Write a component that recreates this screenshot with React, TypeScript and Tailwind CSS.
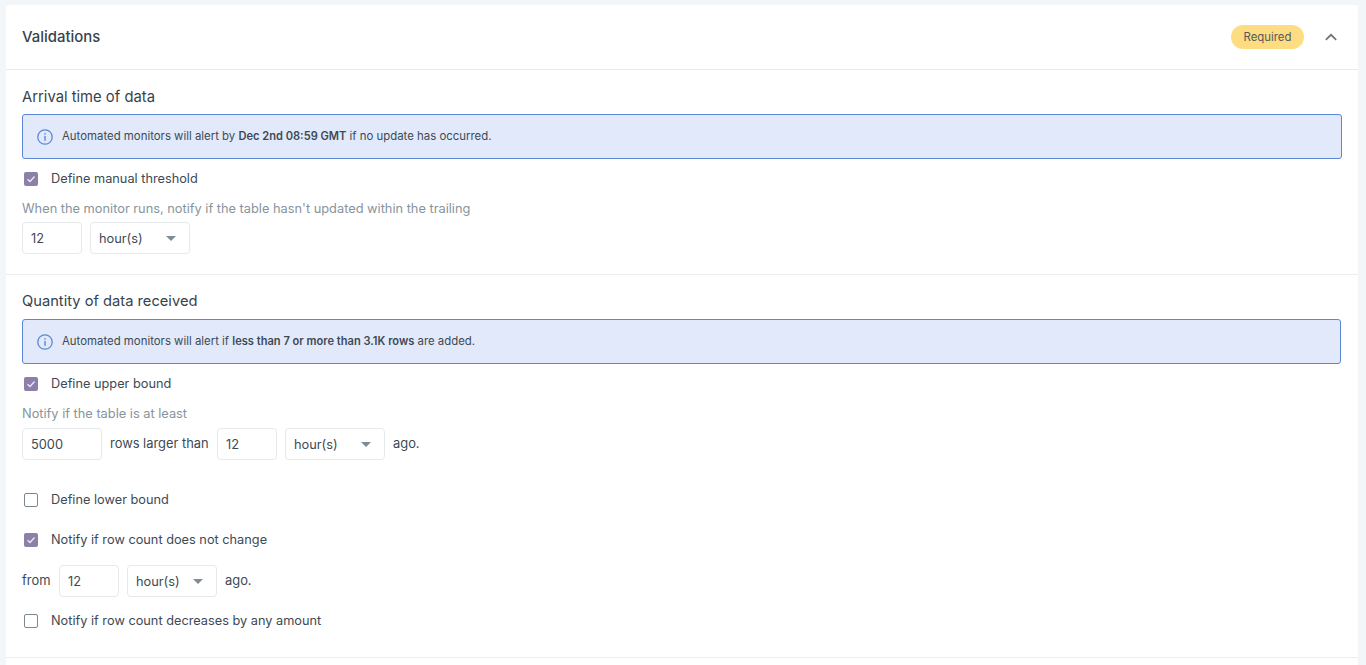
import React from "react";

const Info = () => (
  <svg width="16" height="16" viewBox="0 0 16 16" fill="none" className="shrink-0">
    <circle cx="8" cy="8" r="7.2" stroke="#5b88d6" strokeWidth="1.3" />
    <rect x="7.3" y="7" width="1.4" height="4.8" fill="#5b88d6" />
    <rect x="7.3" y="4.2" width="1.4" height="1.5" fill="#5b88d6" />
  </svg>
);

const Check = ({ checked, label }: { checked?: boolean; label: string }) => (
  <div className="flex items-center h-5 pl-[2px]">
    {checked ? (
      <span className="w-[14px] h-[14px] rounded-[2px] bg-[#8c7fa8] flex items-center justify-center">
        <svg width="10" height="10" viewBox="0 0 10 10" fill="none">
          <path d="M1.5 5.2 L4 7.5 L8.5 2.5" stroke="#eeeaf4" strokeWidth="1.3" />
        </svg>
      </span>
    ) : (
      <span className="w-[14px] h-[14px] rounded-[2px] border-[1.5px] border-[#7c8890] bg-white" />
    )}
    <span className="ml-[13px] text-[12.75px] text-[#3d4a54]">{label}</span>
  </div>
);

const Num = ({ v, w }: { v: string; w: string }) => (
  <div className={`${w} h-[32px] border border-[#e6e9ec] rounded-[4px] flex items-center pl-2 pt-px text-[12.8px] text-[#3d4a54]`}>{v}</div>
);

const Sel = ({ w }: { w: string }) => (
  <div className={`${w} h-[32px] border border-[#e6e9ec] rounded-[4px] flex items-center justify-between pl-2 pr-[13px] pt-px text-[12.8px] text-[#3d4a54]`}>
    <span>hour(s)</span>
    <svg width="10" height="5" viewBox="0 0 10 5"><path d="M0 0 H10 L5 5 Z" fill="#7e8c96" /></svg>
  </div>
);

const Alert = ({ children, w, mt }: { children: React.ReactNode; w: string; mt: string }) => (
  <div className={`${w} ${mt} h-[45px] rounded-[3px] border border-[#5b88d6] bg-[#e1e9fb] flex items-center pl-[14px] gap-[9px] text-[11.4px] text-[#3d4a54]`}>
    <Info />
    <span>{children}</span>
  </div>
);

export default function App() {
  return (
    <div className="h-[665px] overflow-hidden bg-[#f3f6f9] pl-[6px] pr-2 pt-[5px] font-['Inter',sans-serif]">
      <div className="bg-white rounded-t-[3px] h-[700px]">
        <div className="h-[65px] border-b border-[#e8eaec] flex items-center justify-between pl-4 pr-[20px]">
          <span className="text-[14.9px] font-medium text-[#36434d]">Validations</span>
          <div className="flex items-center gap-[20px]">
            <span className="w-[73px] h-6 rounded-full bg-[#fedc81] flex items-center justify-center pt-px text-[11.4px] text-[#55595c]">Required</span>
            <svg width="14" height="14" viewBox="0 0 14 14" fill="none"><path d="M1.8 9.8 L7 4.8 L12.2 9.8" stroke="#6b7378" strokeWidth="1.7" /></svg>
          </div>
        </div>

        <div className="h-[205px] border-b border-[#eceef0] pl-4 pt-[17px]">
          <div className="text-[14.8px] leading-5 text-[#36434d]">Arrival time of data</div>
          <Alert w="w-[1320px]" mt="mt-[7px]">
            Automated monitors will alert by <b className="font-semibold text-[11.1px]">Dec 2nd 08:59 GMT</b> if no update has occurred.
          </Alert>
          <div className="mt-[10px]"><Check checked label="Define manual threshold" /></div>
          <div className="mt-[10px] h-5 leading-5 text-[12.8px] text-[#87949d]">When the monitor runs, notify if the table hasn't updated within the trailing</div>
          <div className="flex gap-2 mt-[3px] items-center">
            <Num v="12" w="w-[60px]" />
            <Sel w="w-[100px]" />
          </div>
        </div>

        <div className="h-[383px] border-b border-[#eceef0] pl-4 pt-[16px]">
          <div className="text-[14.7px] leading-5 text-[#36434d]">Quantity of data received</div>
          <Alert w="w-[1319px]" mt="mt-2">
            Automated monitors will alert if <b className="font-semibold text-[11.1px]">less than 7 or more than 3.1K rows</b> are added.
          </Alert>
          <div className="mt-[10px]"><Check checked label="Define upper bound" /></div>
          <div className="mt-[10px] h-5 leading-5 text-[12.8px] text-[#87949d]">Notify if the table is at least</div>
          <div className="flex gap-2 mt-1 items-center text-[12.9px] text-[#3d4a54]">
            <Num v="5000" w="w-[80px]" />
            <span className="w-[99px]">rows larger than</span>
            <Num v="12" w="w-[60px]" />
            <Sel w="w-[100px]" />
            <span>ago.</span>
          </div>
          <div className="mt-[30px]"><Check label="Define lower bound" /></div>
          <div className="mt-[20px]"><Check checked label="Notify if row count does not change" /></div>
          <div className="flex gap-2 mt-[15px] items-center text-[12.9px] text-[#3d4a54]">
            <span className="w-[29px]">from</span>
            <Num v="12" w="w-[60px]" />
            <Sel w="w-[90px]" />
            <span>ago.</span>
          </div>
          <div className="mt-[14px]"><Check label="Notify if row count decreases by any amount" /></div>
        </div>
      </div>
    </div>
  );
}
